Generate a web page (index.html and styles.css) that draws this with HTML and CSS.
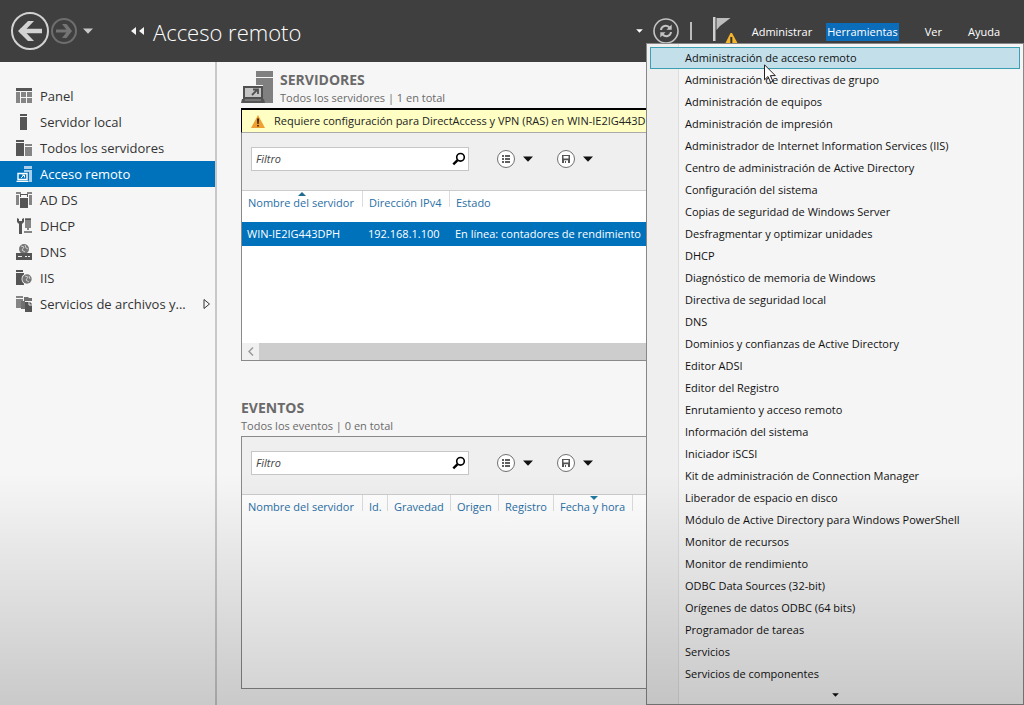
FILE: index.html
```html
<!DOCTYPE html>
<html lang="es">
<head>
<meta charset="utf-8">
<title>Acceso remoto</title>
<link rel="stylesheet" href="styles.css">
</head>
<body>
<svg class="defs" aria-hidden="true">
  <symbol id="search" viewBox="0 0 14 14"><circle cx="8.5" cy="5.3" r="3.8" fill="none" stroke="#000" stroke-width="1.6"/><path d="M5.6 8.2L1.3 12.4" stroke="#000" stroke-width="2.4"/></symbol>
  <symbol id="list" viewBox="0 0 20 20"><circle cx="10" cy="10" r="8.5" fill="#fff" stroke="#707070"/><path d="M6 6h2v2H6zM9 6h5v2H9zM6 9h2v2H6zM9 9h5v2H9zM6 12h2v2H6zM9 12h5v2H9z" fill="#606060"/></symbol>
  <symbol id="save" viewBox="0 0 20 20"><circle cx="10" cy="10" r="8.5" fill="#fff" stroke="#707070"/><path fill-rule="evenodd" d="M6 6h8v8H6zM7.5 7v2.6h5V7zM8 11.3V14h4v-2.7z" fill="#555"/><path d="M9 12h1v2H9z" fill="#555"/></symbol>
  <symbol id="caret" viewBox="0 0 10 6"><path d="M0 .5h10L5 5.7z" fill="currentColor"/></symbol>
</svg>

<header class="topbar">
  <button class="bare" aria-label="Atrás"><svg width="40" height="40" viewBox="0 0 40 40"><circle cx="20" cy="20" r="18" fill="none" stroke="#d2d2d2" stroke-width="2"/><path d="M10 20h22" stroke="#d2d2d2" stroke-width="4.500"/><path d="M18 10h6l-9.500 10L24 30h-6L8 20z" fill="#d2d2d2"/></svg></button>
  <button class="bare" aria-label="Adelante"><svg width="28" height="28" viewBox="0 0 28 28"><circle cx="14" cy="14" r="12" fill="none" stroke="#6e6e6e" stroke-width="2"/><path d="M6 14h14" stroke="#747474" stroke-width="3"/><path d="M12 7h4.500L22 14l-5.500 7H12l5.500-7z" fill="#747474"/></svg></button>
  <button class="bare history" aria-label="Historial"><svg width="10" height="6"><use href="#caret"/></svg></button>
  <svg class="rewind" width="14" height="8" viewBox="0 0 14 8"><path d="M5 0v8L0 4zM13 0v8L8 4z" fill="#f4f4f4"/></svg>
  <h1>Acceso remoto</h1>
  <div class="tools">
    <button class="bare light" aria-label="Más ubicaciones"><svg width="7" height="4"><use href="#caret"/></svg></button>
    <button class="bare" aria-label="Actualizar"><svg width="26" height="26" viewBox="0 0 26 26"><circle cx="13" cy="13" r="12" fill="none" stroke="#c4c4c4" stroke-width="1.600"/><path d="M8 12c.5-4.500 5.500-5.500 8.500-2.500M18 14c-.5 4.500-5.500 5.500-8.500 2.500" fill="none" stroke="#c4c4c4" stroke-width="2"/><path d="M18.700 6.500v5.200h-5.200zM7.300 19.500v-5.200h5.200z" fill="#c4c4c4"/></svg></button>
    <span class="bar"></span>
    <button class="bare flag" aria-label="Notificaciones"><svg width="26" height="28" viewBox="0 0 26 28"><path d="M1 0h2.500v24H1z" fill="#d0d0d0"/><path d="M4.500 1h14L8 9l-3.500 4z" fill="#bdbdbd"/><path d="M18.500 16h1.500l6 11v1H13v-1z" fill="#f5b52a"/><path d="M18.300 20h2v6h-2z" fill="#333"/></svg></button>
  </div>
  <nav class="menubar">
    <button>Administrar</button>
    <button class="open" aria-expanded="true">Herramientas</button>
    <button>Ver</button>
    <button>Ayuda</button>
  </nav>
</header>

<div class="body">
  <nav class="side">
    <a href="#"><svg width="16" height="16"><path d="M0 0h16v3H0z" fill="#555"/><path d="M0 4h4v11H0zM5 4h5v5H5zM11 4h5v5h-5zM5 10h5v5H5zM11 10h5v5h-5z" fill="#858585"/></svg>Panel</a>
    <a href="#"><svg width="16" height="16"><path d="M4 0h7v2H4zM4 3h7v13H4z" fill="#555"/></svg>Servidor local</a>
    <a href="#"><svg width="16" height="16"><path d="M0 0h8v2H0zM0 3h8v13H0z" fill="#555"/><path d="M9 4h7v2H9zM9 7h7v9H9z" fill="#858585"/></svg>Todos los servidores</a>
    <a href="#" class="current"><svg width="16" height="16"><path d="M8 0h8v3H8zM8 4h8v12h-3V6H8z" fill="#a9cfeb"/><path d="M2 7.500h9v6H2zM.5 15.500h12" fill="none" stroke="#fff" stroke-width="1.400"/><path d="M5 12l3-3M6 9h2.500v2.500" fill="none" stroke="#fff"/></svg>Acceso remoto</a>
    <a href="#"><svg width="16" height="16"><path d="M0 0h5v2H0zM0 3h3v10H0zM11 0h5v2h-5zM13 3h3v10h-3z" fill="#858585"/><path d="M4 2h8v3h-1V3H5v2H4zM4 6h8v10H4z" fill="#555"/></svg>AD DS</a>
    <a href="#"><svg width="16" height="16"><path d="M1 0v4l2 2v10h3V6l2-2V0L6 1v2H3V1z" fill="#555"/><path d="M9 0h6v10H9zM11 10h2v2h-2zM8 13h8v2H8z" fill="#858585"/><path d="M9 1h6v1H9z" fill="#555"/></svg>DHCP</a>
    <a href="#"><svg width="16" height="16"><circle cx="8" cy="5" r="5" fill="#777"/><path d="M5 2l3 1-2 3 3 2M9 1l1 3 2 1" stroke="#ccc" fill="none"/><path d="M0 9h16v7H0z" fill="#555"/><path d="M2 12h4v1H2zM9 12h2v1H9zM12 12h2v1h-2z" fill="#eee"/></svg>DNS</a>
    <a href="#"><svg width="16" height="16"><path d="M0 0h7v2H0zM0 3h8v12H0z" fill="#555"/><circle cx="11" cy="9" r="5.500" fill="#f6f6f6"/><circle cx="11" cy="9" r="4.700" fill="#777"/><path d="M9 6l3 1-2 3 3 2M13 6l1 3" stroke="#ccc" fill="none"/></svg>IIS</a>
    <a href="#"><svg width="16" height="16"><path d="M0 0h7v2H0zM0 3h7v9H0z" fill="#858585"/><path d="M8 1h4l1 1h3v3H8zM5 5h4v8H5z" fill="#707070"/><path d="M9 6h5l2 2v8H9z" fill="#555"/><path d="M13 6v3h3" stroke="#eee" fill="none"/></svg>Servicios de archivos y...<svg class="expand" width="8" height="12"><path d="M1 1.500v9l5.500-4.500z" fill="none" stroke="#333"/></svg></a>
  </nav>

  <main>
    <section>
      <div class="head">
        <svg width="32" height="32" viewBox="0 0 32 32"><path d="M15 0h17v6H15zM15 7h17v3H15zM15 10h17v22H15z" fill="#808080"/><path d="M1 14h21v18H1z" fill="#f6f6f6"/><path d="M3 16h18v11H3z" fill="#c4c4c4" stroke="#505050" stroke-width="2"/><path d="M1 28h22l1 4H0z" fill="#555"/><path d="M4 29h16" stroke="#999"/><path d="M11 24l5-5M12 18.500h5V23" fill="none" stroke="#505050" stroke-width="1.800"/></svg>
        <div><h2>SERVIDORES</h2><p>Todos los servidores | 1 en total</p></div>
      </div>
      <div class="panel">
        <div class="notice"><svg width="14" height="13" viewBox="0 0 14 13"><path d="M7 0l7 13H0z" fill="#f0a030"/><path d="M6 3.500h2L7.600 9H6.400zM6.200 10h1.600v1.600H6.200z" fill="#302010"/></svg><span>Requiere configuración para DirectAccess y VPN (RAS) en WIN-IE2IG443DPH</span></div>
        <div class="filterbar">
          <label class="search"><input type="text" placeholder="Filtro" aria-label="Filtro de servidores"><svg width="14" height="14"><use href="#search"/></svg></label>
          <button class="bare" aria-label="Criterios"><svg width="20" height="20"><use href="#list"/></svg><svg width="10" height="6"><use href="#caret"/></svg></button>
          <button class="bare" aria-label="Guardar consulta"><svg width="20" height="20"><use href="#save"/></svg><svg width="10" height="6"><use href="#caret"/></svg></button>
        </div>
        <div class="grid">
          <table>
            <colgroup><col class="c-name"><col class="c-ip"><col></colgroup>
            <thead><tr><th class="asc">Nombre del servidor</th><th>Dirección IPv4</th><th>Estado</th></tr></thead>
            <tbody><tr><td>WIN-IE2IG443DPH</td><td>192.168.1.100</td><td>En línea: contadores de rendimiento</td></tr></tbody>
          </table>
        </div>
        <div class="scroll"><button class="bare" aria-label="Desplazar a la izquierda"><svg width="6" height="9"><path d="M5 .5l-4 4 4 4" fill="none" stroke="#999" stroke-width="1.500"/></svg></button></div>
      </div>
    </section>
    <section class="events">
      <div class="head"><div><h2>EVENTOS</h2><p>Todos los eventos | 0 en total</p></div></div>
      <div class="panel">
        <div class="filterbar">
          <label class="search"><input type="text" placeholder="Filtro" aria-label="Filtro de eventos"><svg width="14" height="14"><use href="#search"/></svg></label>
          <button class="bare" aria-label="Criterios"><svg width="20" height="20"><use href="#list"/></svg><svg width="10" height="6"><use href="#caret"/></svg></button>
          <button class="bare" aria-label="Guardar consulta"><svg width="20" height="20"><use href="#save"/></svg><svg width="10" height="6"><use href="#caret"/></svg></button>
        </div>
        <div class="grid tall">
          <table>
            <colgroup><col class="c-name"><col class="c-id"><col class="c-sev"><col class="c-src"><col class="c-log"><col class="c-date"><col></colgroup>
            <thead><tr><th>Nombre del servidor</th><th>Id.</th><th>Gravedad</th><th>Origen</th><th>Registro</th><th class="desc">Fecha y hora</th><th></th></tr></thead>
          </table>
        </div>
      </div>
    </section>
  </main>
</div>

<div class="dropdown" role="menu">
  <button role="menuitem" class="hover">Administración de acceso remoto</button>
  <button role="menuitem">Administración de directivas de grupo</button>
  <button role="menuitem">Administración de equipos</button>
  <button role="menuitem">Administración de impresión</button>
  <button role="menuitem">Administrador de Internet Information Services (IIS)</button>
  <button role="menuitem">Centro de administración de Active Directory</button>
  <button role="menuitem">Configuración del sistema</button>
  <button role="menuitem">Copias de seguridad de Windows Server</button>
  <button role="menuitem">Desfragmentar y optimizar unidades</button>
  <button role="menuitem">DHCP</button>
  <button role="menuitem">Diagnóstico de memoria de Windows</button>
  <button role="menuitem">Directiva de seguridad local</button>
  <button role="menuitem">DNS</button>
  <button role="menuitem">Dominios y confianzas de Active Directory</button>
  <button role="menuitem">Editor ADSI</button>
  <button role="menuitem">Editor del Registro</button>
  <button role="menuitem">Enrutamiento y acceso remoto</button>
  <button role="menuitem">Información del sistema</button>
  <button role="menuitem">Iniciador iSCSI</button>
  <button role="menuitem">Kit de administración de Connection Manager</button>
  <button role="menuitem">Liberador de espacio en disco</button>
  <button role="menuitem">Módulo de Active Directory para Windows PowerShell</button>
  <button role="menuitem">Monitor de recursos</button>
  <button role="menuitem">Monitor de rendimiento</button>
  <button role="menuitem">ODBC Data Sources (32-bit)</button>
  <button role="menuitem">Orígenes de datos ODBC (64 bits)</button>
  <button role="menuitem">Programador de tareas</button>
  <button role="menuitem">Servicios</button>
  <button role="menuitem">Servicios de componentes</button>
  <div class="more"><svg width="7" height="4"><use href="#caret"/></svg></div>
</div>
<svg class="pointer" width="12" height="20" viewBox="0 0 12 20"><path d="M.5 .8v15l3.500-3.300 2.500 5.800 2.400-1-2.500-5.700h4.900z" fill="#fff" stroke="#222"/></svg>
</body>
</html>
```
FILE: styles.css
```css
* { box-sizing: border-box; }
body {
  margin: 0;
  min-height: 100vh;
  position: relative;
  display: flex;
  flex-direction: column;
  background: #f6f6f6;
  color: #222;
  font: 11px/18px "Open Sans", "Noto Sans", sans-serif;
}
body::after {
  content: "";
  position: absolute;
  inset: 0;
  z-index: 5;
  pointer-events: none;
  background: linear-gradient(transparent 67%, rgba(0, 0, 0, .18));
}
h1, h2, p { margin: 0; }
svg { flex: none; display: block; }
.defs { position: absolute; width: 0; height: 0; }
button { font: inherit; color: inherit; }
.bare {
  display: flex;
  align-items: center;
  padding: 0;
  border: 0;
  background: none;
  color: #111;
}

.topbar {
  display: flex;
  align-items: center;
  height: 62px;
  padding: 0 24px 0 10px;
  background: #3f3f3f;
  color: #fff;
}
.history { margin: 0 38px 0 5px; color: #c8c8c8; }
.rewind { margin-right: 8px; }
h1 { flex: 1; font-size: 22px; line-height: 32px; font-weight: 300; padding-top: 2px; }
.tools { display: flex; align-items: center; margin-right: 14px; }
.tools .light { color: #fff; margin-right: 10px; }
.bar { width: 2px; height: 18px; margin: 0 20px 0 11px; background: #bbb; }
.menubar { display: flex; gap: 14px; padding-top: 2px; }
.menubar button {
  padding: 0;
  border: 0;
  background: none;
}
.menubar .open { padding: 0 1px; background: #0b6cba; }
.menubar .open ~ button { margin-left: 12px; }

.body { flex: 1; display: flex; }
.side {
  flex: none;
  width: 217px;
  padding-top: 21px;
  border-right: 2px solid #c8c8c8;
}
.side a {
  display: flex;
  align-items: center;
  gap: 8px;
  height: 26px;
  padding: 0 4px 0 16px;
  color: #333;
  font-size: 13px;
  text-decoration: none;
  white-space: nowrap;
}
.side .current { background: #0072bc; color: #fff; }
.expand { margin-left: auto; }

main { flex: 1; min-width: 0; padding: 9px 16px 16px 24px; }
.head { display: flex; gap: 7px; height: 37px; color: #6a6a6a; }
h2 { font-size: 14px; line-height: 18px; font-weight: 700; }
.events { margin-top: 38px; }
.panel { border: 1px solid #8a8a8a; background: #fff; }
.notice {
  display: flex;
  align-items: center;
  gap: 9px;
  height: 25px;
  margin: -1px -1px 0;
  padding-left: 9px;
  border: solid #000;
  border-width: 2px 1px 0;
  border-bottom: 1px solid #aaa;
  background: #ffffc4;
  white-space: nowrap;
  overflow: hidden;
}
.filterbar {
  display: flex;
  align-items: center;
  gap: 22px;
  padding: 14px 9px 19px;
  background: #efefef;
  border-bottom: 1px solid #ccc;
}
.filterbar button { gap: 7px; width: 38px; }
.search {
  display: flex;
  align-items: center;
  width: 218px;
  height: 24px;
  margin-right: 5px;
  padding: 0 2px 0 4px;
  border: 1px solid #c6c6c6;
  background: #fff;
}
.search input {
  flex: 1;
  min-width: 0;
  padding: 0;
  border: 0;
  outline: 0;
  font: inherit;
  background: none;
}
.search input::placeholder { color: #444; opacity: 1; font-style: italic; }

.grid { height: 152px; overflow: hidden; }
.grid.tall { height: 193px; }
table { width: 100%; table-layout: fixed; border-collapse: collapse; }
.c-name { width: 121px; }
.c-ip { width: 87px; }
.c-id { width: 25px; }
.c-sev { width: 63px; }
.c-src { width: 48px; }
.c-log { width: 55px; }
.c-date { width: 79px; }
th, td { padding: 0 0 0 6px; text-align: left; font-weight: 400; white-space: nowrap; }
th {
  position: relative;
  height: 31px;
  padding-bottom: 8px;
  color: #2a6fa5;
  background: linear-gradient(#ddd, #ddd) right top / 1px 16px no-repeat;
}
th:last-child { background: none; }
.asc::before, .desc::before {
  content: "";
  position: absolute;
  left: 56px;
  top: 1px;
  border: 4px solid transparent;
  border-top-width: 0;
  border-bottom-color: #1f6a8f;
}
.desc::before {
  left: 36px;
  border-width: 4px 4px 0;
  border-top-color: #1f7a9f;
}
td { height: 24px; padding: 0 0 0 5px; background: #0072bc; color: #fff; }
.scroll { height: 17px; background: #cdcdcd; }
.scroll button { width: 17px; height: 17px; justify-content: center; background: #f0f0f0; }

.dropdown {
  position: absolute;
  top: 43px;
  right: 0;
  z-index: 2;
  width: 378px;
  padding: 3px;
  border: 1px solid #888;
  background: linear-gradient(90deg, #efefef 31px, #dedede 31px, #dedede 32px, #f5f5f5 32px);
  color: #111;
}
.dropdown button {
  display: block;
  width: 100%;
  height: 22px;
  padding: 0 0 0 34px;
  border: 1px solid transparent;
  background: none;
  line-height: 20px;
  text-align: left;
}
.dropdown .hover { border-color: #3a9fb0; background: #c2dfea; }
.more { display: flex; justify-content: center; padding: 8px 0 4px; }
.pointer { position: absolute; left: 764px; top: 64px; z-index: 3; }
```
